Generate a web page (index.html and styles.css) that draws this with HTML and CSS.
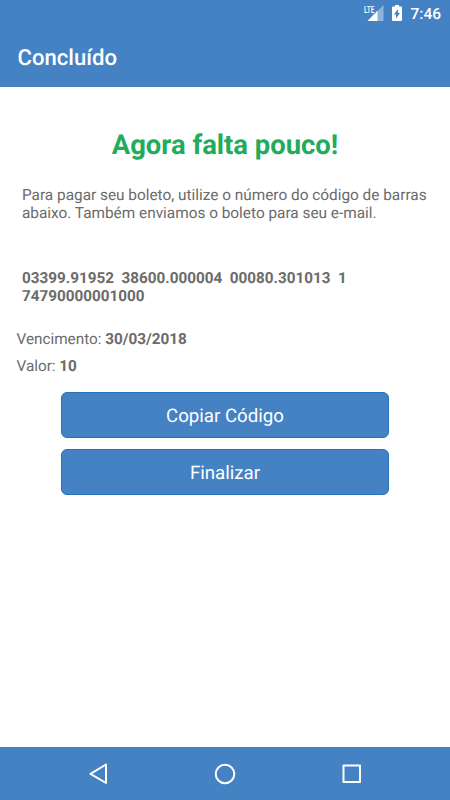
FILE: index.html
```html
<!DOCTYPE html>
<html lang="pt-BR">
<head>
<meta charset="utf-8">
<title>Concluído</title>
<link rel="stylesheet" href="styles.css">
</head>
<body>
<header class="header">
  <div class="status">
    <svg class="signal" width="20" height="17" viewBox="0 0 20 17"><path d="M19.500 0v16H4z" fill="#8fb4dc"/><path d="M13.500 5.500V16H3.500z" fill="#fff"/><path d="M0 0h11.500v8.300H0z" fill="#4482c3"/><text x="0" y="7.500" class="lte" textLength="10.500" lengthAdjust="spacingAndGlyphs">LTE</text></svg>
    <svg class="battery" width="10" height="16" viewBox="0 0 10 16"><path d="M3 0h4v1.500h2q1 0 1 1V15q0 1-1 1H1q-1 0-1-1V2.500q0-1 1-1h2z" fill="#fff"/><path d="M6 4v4h2L4 13.500V9.500H2z" fill="#4482c3"/></svg>
    <span class="time">7:46</span>
  </div>
  <h1 class="title">Concluído</h1>
</header>
<main class="content">
  <h2 class="heading">Agora falta pouco!</h2>
  <p class="intro">Para pagar seu boleto, utilize o número do código de barras<br>abaixo. Também enviamos o boleto para seu e-mail.</p>
  <p class="code">03399.91952  38600.000004  00080.301013  1
74790000001000</p>
  <p class="detail">Vencimento: <b>30/03/2018</b></p>
  <p class="detail">Valor: <b>10</b></p>
  <div class="actions">
    <button class="button">Copiar Código</button>
    <button class="button">Finalizar</button>
  </div>
</main>
<nav class="nav">
  <svg width="24" height="24" viewBox="0 0 24 24"><path d="M20 2.500v18.500L4.500 11.800z"/></svg>
  <svg width="24" height="24" viewBox="0 0 24 24"><circle cx="12" cy="12" r="9.300"/></svg>
  <svg width="24" height="24" viewBox="0 0 24 24"><path d="M3.500 3.500h16.500v16.500H3.500z"/></svg>
</nav>
</body>
</html>
```
FILE: styles.css
```css
* { box-sizing: border-box; margin: 0; padding: 0; }
body { width: 450px; height: 800px; display: flex; flex-direction: column; background: #fff; color: #6b6b6b; font-family: Roboto, sans-serif; text-rendering: geometricPrecision; overflow: hidden; }
.header { height: 87px; background: #4482c3; color: #fff; }
.status { height: 28px; display: flex; align-items: flex-start; justify-content: flex-end; padding: 5px 9px 0 0; }
.signal { margin-right: 8px; }
.battery { margin-right: 8px; }
.lte { font-size: 10px; font-weight: 500; fill: #fff; }
.time { font-size: 15.500px; line-height: 18px; font-weight: 500; }
.title { padding-left: 17.5px; font-size: 22.100px; line-height: 60px; font-weight: 500; }
.content { flex: 1; padding-top: 41px; }
.heading { text-align: center; color: #20ac5c; font-size: 27.400px; line-height: 34px; font-weight: 700; }
.intro { margin: 24px 0 0 22px; font-size: 15.360px; line-height: 18px; white-space: nowrap; }
.code { margin: 46.5px 0 25.5px 22px; font-size: 15.260px; line-height: 18px; font-weight: 700; white-space: pre; }
.detail { margin-left: 16.5px; font-size: 15.300px; line-height: 18px; margin-bottom: 9px; }
.detail b { font-size: 15.300px; }
.actions { width: 328px; margin: 17px 0 0 61px; display: flex; flex-direction: column; gap: 11px; }
.button { height: 46px; border: 1px solid #2474bb; border-radius: 6px; background: #4482c3; color: #fff; font: 400 18.700px/44px Roboto, sans-serif; text-rendering: inherit; padding-top: 1px; }
.nav { height: 53px; background: #4482c3; display: flex; justify-content: space-between; align-items: center; padding: 0 86px; }
.nav svg { fill: none; stroke: #fff; stroke-width: 2; stroke-linejoin: round; }
```
